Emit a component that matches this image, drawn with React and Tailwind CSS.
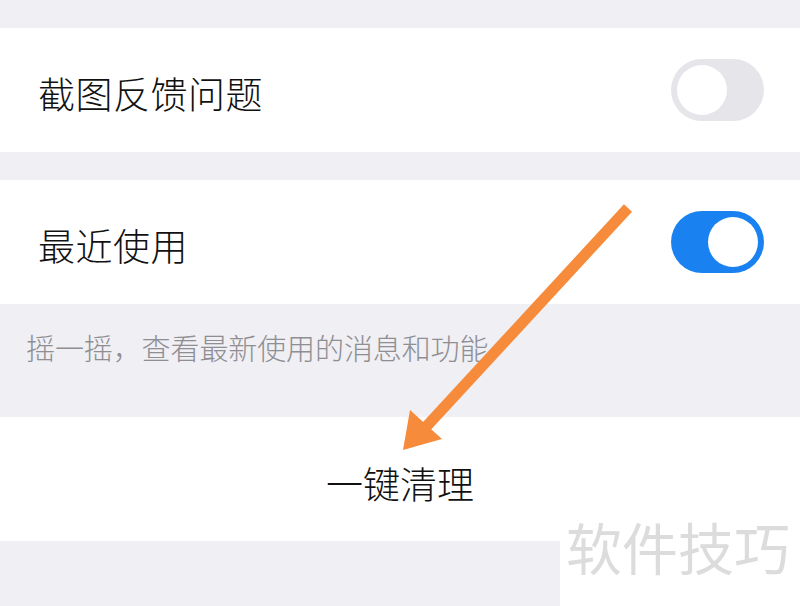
import React from 'react';

const cjk = { fontFamily: '"Noto Sans CJK SC", "Noto Sans", sans-serif' };

function Toggle({ on }) {
    return (
        <div
            className={
                on
                    ? 'w-[93px] h-[62px] rounded-full bg-[#1a82f0] flex items-center justify-end px-[6px]'
                    : 'w-[93px] h-[62px] rounded-full bg-[#e5e5ea] flex items-center justify-start px-[6px]'
            }
        >
            <div className="w-[50px] h-[50px] rounded-full bg-white" />
        </div>
    );
}

function Row({ label, on }) {
    return (
        <div className="h-[124px] bg-white flex items-center justify-between pl-[38px] pr-[36px]">
            <span className="text-[37px] font-light text-[#111] pt-[8px] tracking-[0.5px]" style={cjk}>{label}</span>
            <Toggle on={on} />
        </div>
    );
}

export default function App() {
    return (
        <div className="relative w-[800px] h-[606px] overflow-hidden bg-[#efeff4] flex flex-col pt-[28px]" style={cjk}>
            <Row label="截图反馈问题" on={false} />
            <div className="h-[28px]" />
            <Row label="最近使用" on={true} />

            {/* caption */}
            <div className="h-[113px] pl-[26px] pt-[22px]">
                <p className="text-[29px] font-light text-[#8e8e93] tracking-[-0.1px]">摇一摇，查看最新使用的消息和功能</p>
            </div>

            <div className="h-[124px] bg-white flex items-center justify-center">
                <span className="text-[37px] font-light text-[#111] pt-[10px]">一键清理</span>
            </div>

            {/* watermark */}
            <div className="absolute right-0 bottom-0 w-[240px] h-[96px] bg-white flex items-start justify-center">
                <span className="text-[56px] leading-none text-[#dcdcdc] mt-[8px] -ml-[4px]">软件技巧</span>
            </div>

            {/* orange arrow */}
            <svg className="absolute left-0 top-0" width="800" height="606" viewBox="0 0 800 606">
                <line x1="628" y1="208" x2="425" y2="428" stroke="#f68b3c" strokeWidth="11" />
                <polygon points="403,450 410,410 442,439" fill="#f68b3c" />
            </svg>
        </div>
    );
}
